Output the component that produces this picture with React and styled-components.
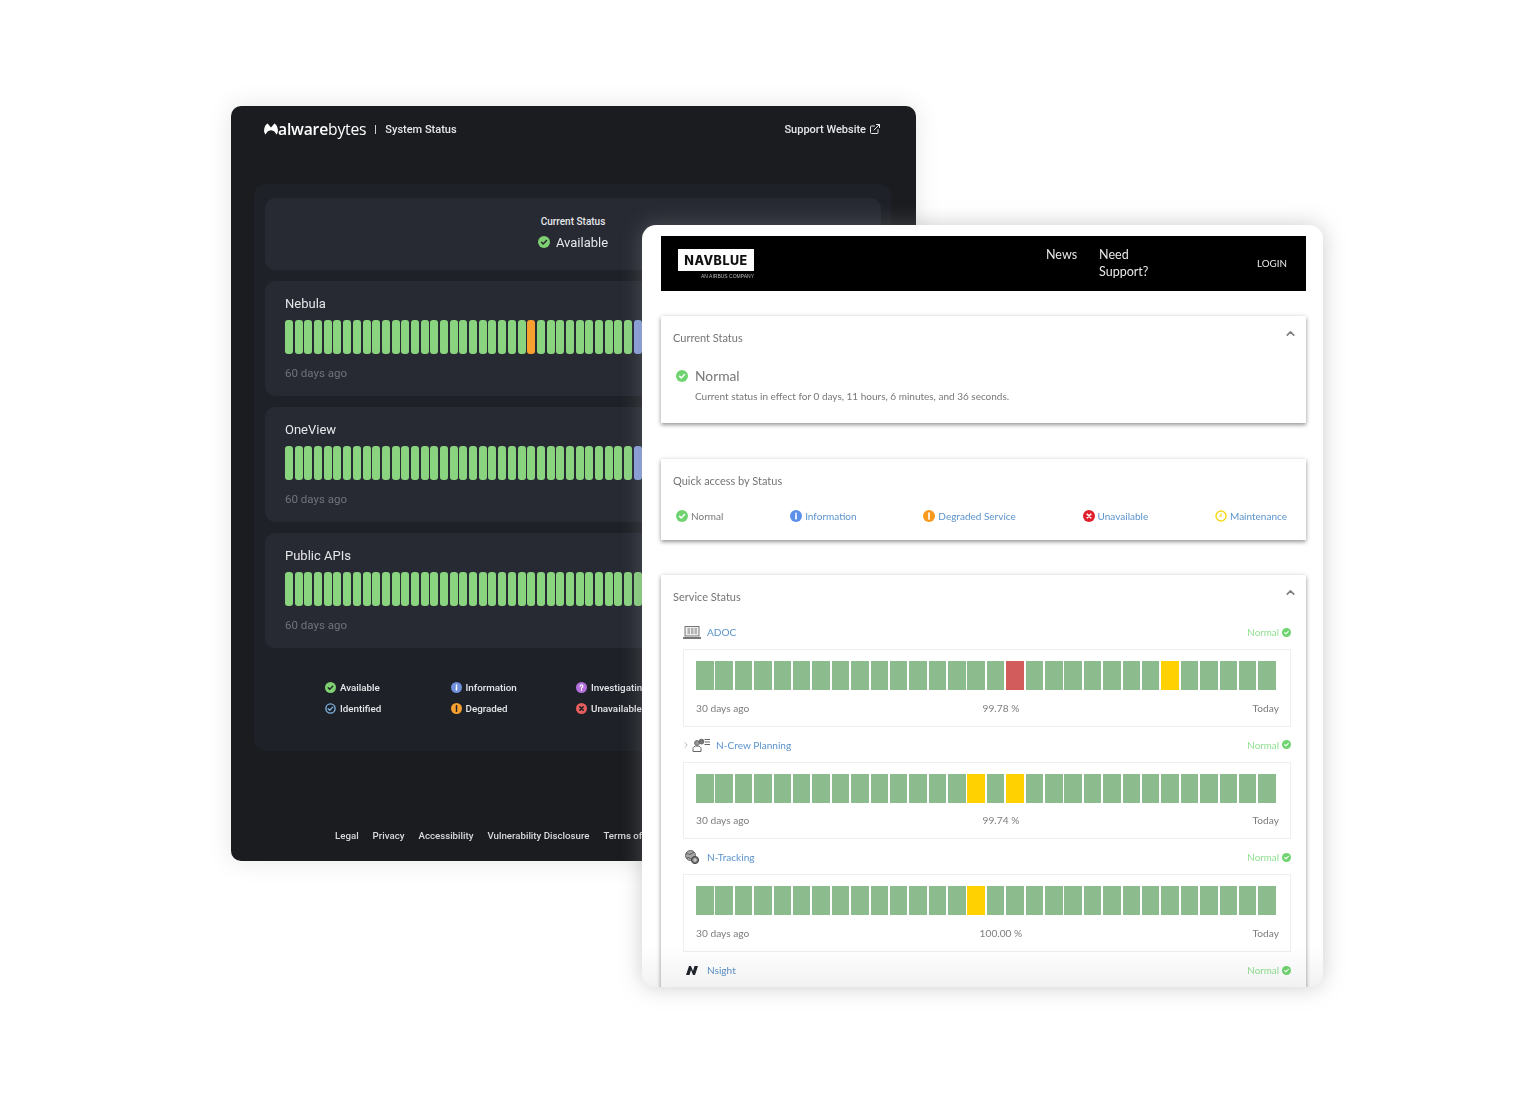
import React from "react";
import styled, { createGlobalStyle } from "styled-components";
import { ChevronRight, ChevronUp, ExternalLink } from "lucide-react";

const GlobalStyle = createGlobalStyle`
  html, body {
    margin: 0;
    background: #fff;
  }
`;

const Stage = styled.div`
  position: relative;
  width: 1536px;
  height: 1097px;
  overflow: hidden;
`;

/* ---------- status icon ---------- */

const glyphs = {
  check: <path d="M7 12.4l3.4 3.4L17 9" fill="none" strokeWidth="3" />,
  info: <path d="M12 11v6.5M12 6.5v1.5" fill="none" strokeWidth="3.4" />,
  warn: <path d="M12 6v7.5M12 16.2v1.8" fill="none" strokeWidth="3.4" />,
  cross: <path d="M8.5 8.5l7 7M15.5 8.5l-7 7" fill="none" strokeWidth="3.4" />,
  help: <path d="M9 9.5a3 3 0 1 1 4.6 2.5c-1 .7-1.6 1.2-1.6 2.4M12 16.6v1.6" fill="none" strokeWidth="2.6" />,
};

const StatusIcon = ({ size, color, kind, ink = "#fff", ring }) => (
  <svg width={size} height={size} viewBox="0 0 24 24" style={{ flexShrink: 0 }}>
    {ring ? (
      <circle cx="12" cy="12" r="10" fill="none" stroke={color} strokeWidth="3" />
    ) : (
      <circle cx="12" cy="12" r="12" fill={color} />
    )}
    {kind === "clock" ? (
      <path d="M12 6.5V12.5H8" fill="none" stroke={color} strokeWidth="2.4" />
    ) : (
      <g stroke={ring ? color : ink} strokeLinecap="round" strokeLinejoin="round">
        {glyphs[kind]}
      </g>
    )}
  </svg>
);

/* ---------- malwarebytes window ---------- */

const DarkWindow = styled.section`
  position: absolute;
  left: 231px;
  top: 106px;
  width: 685px;
  height: 755px;
  box-sizing: border-box;
  background: #1b1c20;
  border-radius: 10px;
  box-shadow: 0 0 26px rgba(0, 0, 0, 0.1);
  font-family: Roboto, "Liberation Sans", sans-serif;
  color: #e6e7ea;
  filter: blur(0.4px);
`;

const DarkHeader = styled.header`
  height: 78px;
  box-sizing: border-box;
  padding: 12px 35px 0 33px;
  display: flex;
  align-items: flex-start;
  justify-content: space-between;
`;

const Brand = styled.div`
  height: 22px;
  display: flex;
  align-items: center;
  font-size: 11px;
  font-weight: 500;
`;

const BrandName = styled.span`
  font-family: "Open Sans", sans-serif;
  font-size: 15.7px;
  letter-spacing: -0.2px;
  color: #fff;
  b {
    font-weight: 600;
  }
`;

const BrandSep = styled.span`
  width: 1px;
  height: 9px;
  background: #cfd0d3;
  margin: 0 9px;
`;

const SupportLink = styled.div`
  height: 22px;
  display: flex;
  align-items: center;
  gap: 3px;
  font-size: 11px;
  font-weight: 500;
`;

const DarkPanel = styled.div`
  margin: 0 25px 0 23px;
  height: 567px;
  box-sizing: border-box;
  padding: 14px 10px 14px 11px;
  display: flex;
  flex-direction: column;
  gap: 11px;
  background: #1e2127;
  border-radius: 12px;
`;

const CurrentCard = styled.div`
  height: 72px;
  display: flex;
  flex-direction: column;
  align-items: center;
  justify-content: center;
  gap: 8px;
  padding-bottom: 3px;
  box-sizing: border-box;
  background: #272a33;
  border-radius: 10px;
`;

const CurrentLabel = styled.div`
  font-size: 10px;
  font-weight: 500;
`;

const CurrentValue = styled.div`
  display: flex;
  align-items: center;
  gap: 6px;
  font-size: 13px;
`;

const ServiceCard = styled.div`
  height: 115px;
  box-sizing: border-box;
  padding: 15px 20px 0;
  background: #272a33;
  border-radius: 10px;
`;

const ServiceName = styled.div`
  font-size: 13px;
  line-height: 16px;
`;

const PillRow = styled.div`
  display: flex;
  gap: 1.7px;
  margin-top: 8px;
`;

const Pill = styled.span`
  flex: none;
  width: 8px;
  height: 34px;
  border-radius: 3px;
  background: ${(p) => p.$color};
`;

const DaysAgo = styled.div`
  margin-top: 12px;
  font-size: 11.5px;
  color: #6f737c;
`;

const LegendGrid = styled.div`
  display: grid;
  grid-template-columns: repeat(4, 125.5px);
  grid-auto-rows: 21px;
  padding: 18px 0 0 60px;
`;

const LegendItem = styled.div`
  display: flex;
  align-items: center;
  gap: 4px;
  font-size: 9.8px;
  font-weight: 500;
  white-space: nowrap;
`;

const DarkFooter = styled.footer`
  display: flex;
  gap: 14px;
  padding: 79px 0 0 104px;
  font-size: 9.7px;
  font-weight: 500;
  color: #d8d9dc;
  white-space: nowrap;
`;

const MalwareMark = () => (
  <svg width="14" height="12" viewBox="0 0 14 12" style={{ marginTop: -1 }}>
    <path
      d="M3.6.4C1.6 1.5.3 4 .1 7c-.1 2 .5 3.9 1.6 4.6.9-2.2 2.3-4.4 5.3-4.4s4.4 2.2 5.3 4.4c1.1-.7 1.7-2.6 1.6-4.6-.2-3-1.5-5.5-3.5-6.6C9.3 1.6 8.2 3 7 4.4 5.8 3 4.7 1.6 3.6.4z"
      fill="#fff"
    />
  </svg>
);

const GREEN = "#8ad480";
const ORANGE = "#f7a02f";
const PERIWINKLE = "#8ba3e0";

const darkServices = [
  { name: "Nebula", marks: { 25: ORANGE, 36: PERIWINKLE } },
  { name: "OneView", marks: { 36: PERIWINKLE } },
  { name: "Public APIs", marks: {} },
];

const legend = [
  { label: "Available", color: "#7fd072", kind: "check", ink: "#1e2127" },
  { label: "Information", color: "#6f8fdc", kind: "info" },
  { label: "Investigating", color: "#b36fdc", kind: "help" },
  { label: "Maintenance", color: "#e6c84a", kind: "clock", ring: true },
  { label: "Identified", color: "#7fb0e0", kind: "check", ring: true },
  { label: "Degraded", color: "#f7a02f", kind: "warn", ink: "#1e2127" },
  { label: "Unavailable", color: "#e85d5d", kind: "cross", ink: "#1e2127" },
];

const footerLinks = ["Legal", "Privacy", "Accessibility", "Vulnerability Disclosure", "Terms of Service"];

const MalwarebytesWindow = () => (
  <DarkWindow>
    <DarkHeader>
      <Brand>
        <MalwareMark />
        <BrandName>
          <b>alware</b>bytes
        </BrandName>
        <BrandSep />
        System Status
      </Brand>
      <SupportLink>
        Support Website
        <ExternalLink size={12} strokeWidth={2} />
      </SupportLink>
    </DarkHeader>
    <DarkPanel>
      <CurrentCard>
        <CurrentLabel>Current Status</CurrentLabel>
        <CurrentValue>
          <StatusIcon size={12} color="#7fd072" kind="check" ink="#272a33" />
          Available
        </CurrentValue>
      </CurrentCard>
      {darkServices.map((s) => (
        <ServiceCard key={s.name}>
          <ServiceName>{s.name}</ServiceName>
          <PillRow>
            {Array.from({ length: 60 }, (_, i) => (
              <Pill key={i} $color={s.marks[i] || GREEN} />
            ))}
          </PillRow>
          <DaysAgo>60 days ago</DaysAgo>
        </ServiceCard>
      ))}
      <LegendGrid>
        {legend.map((l) => (
          <LegendItem key={l.label}>
            <StatusIcon size={11} color={l.color} kind={l.kind} ink={l.ink} ring={l.ring} />
            {l.label}
          </LegendItem>
        ))}
      </LegendGrid>
    </DarkPanel>
    <DarkFooter>
      {footerLinks.map((f) => (
        <span key={f}>{f}</span>
      ))}
    </DarkFooter>
  </DarkWindow>
);

/* ---------- navblue window ---------- */

const LightWindow = styled.section`
  position: absolute;
  left: 642px;
  top: 225px;
  width: 681px;
  height: 762px;
  box-sizing: border-box;
  padding: 11px 17px 0 19px;
  overflow: hidden;
  background: #fff;
  border-radius: 14px;
  box-shadow: 0 0 22px rgba(135, 135, 135, 0.42);
  font-family: Lato, "Open Sans", sans-serif;
  color: #777;
  filter: blur(0.35px);
  &::after {
    content: "";
    position: absolute;
    left: 0;
    right: 0;
    bottom: 0;
    height: 42px;
    background: linear-gradient(rgba(0, 0, 0, 0), rgba(0, 0, 0, 0.05));
  }
`;

const NavBar = styled.header`
  height: 55px;
  display: flex;
  align-items: flex-start;
  background: #000;
  color: #e8e8e8;
`;

const LogoBlock = styled.div`
  margin: 13px 0 0 17px;
  width: 76px;
`;

const LogoPlate = styled.div`
  height: 22px;
  display: flex;
  align-items: center;
  justify-content: center;
  background: #fff;
  color: #111;
  font-family: Inter, "Liberation Sans", sans-serif;
  font-size: 12.5px;
  font-weight: 800;
  letter-spacing: 0.5px;
`;

const LogoTag = styled.div`
  margin-top: 3px;
  text-align: right;
  font-family: "Liberation Sans", sans-serif;
  font-size: 5px;
  line-height: 5px;
  color: #bbb;
  white-space: nowrap;
`;

const NavLinks = styled.nav`
  display: flex;
  gap: 22px;
  margin: 10px 0 0 292px;
  font-size: 12.5px;
  line-height: 17px;
`;

const NeedSupport = styled.span`
  width: 60px;
`;

const LoginLink = styled.span`
  margin: 20px 19px 0 auto;
  font-size: 9.8px;
  line-height: 14px;
`;

const Card = styled.div`
  margin-top: ${(p) => p.$top}px;
  height: ${(p) => (p.$height ? `${p.$height}px` : "auto")};
  box-sizing: border-box;
  padding: 12px 15px 0 12px;
  background: #fff;
  box-shadow: 0 2px 4px rgba(0, 0, 0, 0.38), 0 0 6px rgba(0, 0, 0, 0.08);
`;

const CardHead = styled.div`
  display: flex;
  justify-content: space-between;
  height: 20px;
  line-height: 20px;
  font-size: 11px;
  color: #757575;
  svg {
    margin: -1px -6px 0 0;
    color: #808080;
  }
`;

const NormalLine = styled.div`
  display: flex;
  align-items: center;
  gap: 7px;
  margin: 19px 0 0 3px;
  font-size: 13.8px;
  line-height: 18px;
  color: #777;
`;

const NormalNote = styled.div`
  margin: 4px 0 0 22px;
  font-size: 10px;
  line-height: 14px;
  color: #777;
`;

const QuickRow = styled.div`
  display: flex;
  justify-content: space-between;
  margin: 18px 4px 0 3px;
`;

const QuickItem = styled.div`
  display: flex;
  align-items: center;
  gap: 3px;
  font-size: 10px;
  line-height: 14px;
  color: ${(p) => (p.$plain ? "#777" : "#5b93cc")};
`;

const ServiceList = styled.div`
  display: flex;
  flex-direction: column;
  gap: 7px;
  margin: 14px 0 0 10px;
`;

const RowHead = styled.div`
  height: 22px;
  display: flex;
  align-items: center;
  justify-content: space-between;
`;

const RowTitle = styled.div`
  display: flex;
  align-items: center;
  gap: ${(p) => p.$gap}px;
  padding-left: ${(p) => p.$indent}px;
  font-size: 10.1px;
  color: #5b93cc;
`;

const RowStatus = styled.div`
  display: flex;
  align-items: center;
  gap: 3px;
  font-size: 9.8px;
  color: #90e090;
`;

const UptimeBox = styled.div`
  margin-top: 6px;
  height: 77.7px;
  box-sizing: border-box;
  padding: 11px 11px 0 12px;
  border: 1px solid #efefef;
`;

const BlockRow = styled.div`
  display: flex;
  gap: 1.9px;
`;

const Block = styled.span`
  flex: none;
  width: 17.5px;
  height: 29px;
  background: ${(p) => p.$color};
`;

const UptimeFoot = styled.div`
  display: flex;
  justify-content: space-between;
  margin-top: 11.5px;
  font-size: 10.2px;
  line-height: 12px;
  color: #7d7d7d;
`;

const LaptopIcon = () => (
  <svg width="18" height="13" viewBox="0 0 18 13" fill="none" stroke="#777">
    <rect x="2" y=".5" width="14" height="9.5" fill="#eee" />
    <path d="M4.5 3h2.5M4.5 5h2.5M4.5 7h2.5M8 3h2.5M8 5h2.5M8 7h2.5M11.5 3h2.5M11.5 5h2.5M11.5 7h2.5" />
    <path d="M0 12h18" strokeWidth="2" />
  </svg>
);

const CrewIcon = () => (
  <svg width="18" height="14" viewBox="0 0 18 14" fill="none" stroke="#666">
    <circle cx="5" cy="5" r="2.4" fill="#999" />
    <circle cx="9.5" cy="3.6" r="2.4" fill="#777" />
    <path d="M1 13.5V10.5c0-1.5 1.4-2.5 4-2.5s4 1 4 2.5v3z" fill="#fff" />
    <path d="M12.5 1.5H18M13 4h5M12.5 6.5H18" />
  </svg>
);

const GlobeIcon = () => (
  <svg width="14" height="14" viewBox="0 0 14 14">
    <circle cx="5.5" cy="5.5" r="5" fill="#a6a6a6" stroke="#666" />
    <path d="M1 4c2-1 3 1 5 0s2-2 3-1M2 8c2-1 3 0 4 1" fill="none" stroke="#555" />
    <circle cx="10" cy="10" r="3.6" fill="#777" stroke="#444" />
    <path d="M8 10h4M10 8v4" stroke="#ddd" />
  </svg>
);

const NsightIcon = () => (
  <svg width="12" height="9" viewBox="0 0 12 9">
    <path d="M0 9 3 0h2l2 5 1.5-5H12L9 9H7L5 4 3.5 9z" fill="#20242c" />
  </svg>
);

const SAGE = "#8cbb8d";
const SUN = "#ffd100";
const BRICK = "#d25b5b";

const lightServices = [
  { name: "ADOC", icon: <LaptopIcon />, gap: 6, indent: 0, marks: { 16: BRICK, 24: SUN }, pct: "99.78 %" },
  { name: "N-Crew Planning", icon: <CrewIcon />, gap: 6, indent: 0, chevron: true, marks: { 14: SUN, 16: SUN }, pct: "99.74 %" },
  { name: "N-Tracking", icon: <GlobeIcon />, gap: 8, indent: 2, marks: { 14: SUN }, pct: "100.00 %" },
  { name: "Nsight", icon: <NsightIcon />, gap: 9, indent: 3 },
];

const quickLinks = [
  { label: "Normal", color: "#6fd46f", kind: "check", plain: true },
  { label: "Information", color: "#5b8fe8", kind: "info" },
  { label: "Degraded Service", color: "#f79a1e", kind: "warn" },
  { label: "Unavailable", color: "#e0202c", kind: "cross" },
  { label: "Maintenance", color: "#f2d91f", kind: "clock", ring: true },
];

const NavblueWindow = () => (
  <LightWindow>
    <NavBar>
      <LogoBlock>
        <LogoPlate>NAVBLUE</LogoPlate>
        <LogoTag>AN AIRBUS COMPANY</LogoTag>
      </LogoBlock>
      <NavLinks>
        <span>News</span>
        <NeedSupport>Need Support?</NeedSupport>
      </NavLinks>
      <LoginLink>LOGIN</LoginLink>
    </NavBar>

    <Card $top={25} $height={107}>
      <CardHead>
        Current Status
        <ChevronUp size={13} strokeWidth={3} />
      </CardHead>
      <NormalLine>
        <StatusIcon size={12} color="#6fd46f" kind="check" />
        Normal
      </NormalLine>
      <NormalNote>Current status in effect for 0 days, 11 hours, 6 minutes, and 36 seconds.</NormalNote>
    </Card>

    <Card $top={36} $height={81}>
      <CardHead>Quick access by Status</CardHead>
      <QuickRow>
        {quickLinks.map((q) => (
          <QuickItem key={q.label} $plain={q.plain}>
            <StatusIcon size={12} color={q.color} kind={q.kind} ring={q.ring} />
            {q.label}
          </QuickItem>
        ))}
      </QuickRow>
    </Card>

    <Card $top={35}>
      <CardHead>
        Service Status
        <ChevronUp size={13} strokeWidth={3} />
      </CardHead>
      <ServiceList>
        {lightServices.map((s) => (
          <div key={s.name}>
            <RowHead>
              <RowTitle $gap={s.gap} $indent={s.indent}>
                {s.chevron && <ChevronRight size={10} color="#aaa" strokeWidth={2} style={{ margin: "0 -5px 0 -2px" }} />}
                {s.icon}
                {s.name}
              </RowTitle>
              <RowStatus>
                Normal
                <StatusIcon size={9} color="#6fd46f" kind="check" />
              </RowStatus>
            </RowHead>
            {/* the last row is cut by the window edge, only its box border shows */}
            <UptimeBox>
              {s.marks && (
                <>
                  <BlockRow>
                    {Array.from({ length: 30 }, (_, i) => (
                      <Block key={i} $color={s.marks[i] || SAGE} />
                    ))}
                  </BlockRow>
                  <UptimeFoot>
                    <span>30 days ago</span>
                    <span>{s.pct}</span>
                    <span>Today</span>
                  </UptimeFoot>
                </>
              )}
            </UptimeBox>
          </div>
        ))}
      </ServiceList>
    </Card>
  </LightWindow>
);

export default function App() {
  return (
    <Stage>
      <GlobalStyle />
      <MalwarebytesWindow />
      <NavblueWindow />
    </Stage>
  );
}
